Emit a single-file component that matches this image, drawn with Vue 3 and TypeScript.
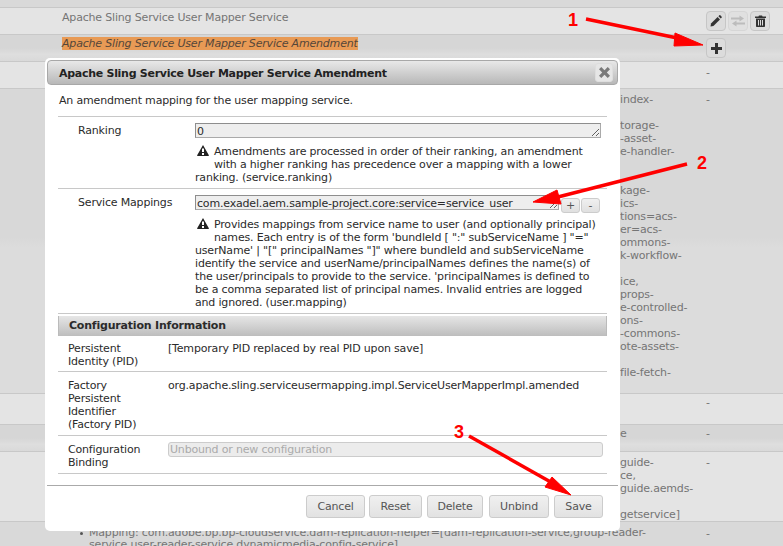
<script setup lang="ts">
interface BgRow { cls: string; name?: string; italic?: boolean; lines?: string[]; dash?: boolean; tools?: boolean; plus?: boolean }
const rows: BgRow[] = [
  { cls: 'r-top' },
  { cls: 'r-light h27 tight', name: 'Apache Sling Service User Mapper Service', tools: true },
  { cls: 'r-grad h27 tighter', name: 'Apache Sling Service User Mapper Service Amendment', italic: true, plus: true },
  { cls: 'r-light h27', dash: true },
  { cls: 'r-dark h305', dash: true, lines: ['index-', '', 'torage-', '-asset-', 'e-handler-', '', '', 'kage-', 'ics-', 'tions=acs-', 'er=acs-', 'ommons-', 'k-workflow-', '', 'ice,', 'props-', 'e-controlled-', 'ons-', '-commons-', 'ote-assets-', '', 'file-fetch-'] },
  { cls: 'r-light h31 tighter', dash: true },
  { cls: 'r-grad h27 tighter', dash: true, lines: ['e'] },
  { cls: 'r-light h70', dash: true, lines: ['guide-', 'ce,', 'guide.aemds-', '', 'getservice]'] }
]
const help1 = ['Amendments are processed in order of their ranking, an amendment', 'with a higher ranking has precedence over a mapping with a lower', 'ranking. (service.ranking)']
const help2 = [
  'Provides mappings from service name to user (and optionally principal)',
  'names. Each entry is of the form \'bundleId [ ":" subServiceName ] "="',
  'userName\' | "[" principalNames "]" where bundleId and subServiceName',
  'identify the service and userName/principalNames defines the name(s) of',
  "the user/principals to provide to the service. 'principalNames is defined to",
  'be a comma separated list of principal names. Invalid entries are logged',
  'and ignored. (user.mapping)'
]
const actions = ['Cancel', 'Reset', 'Delete', 'Unbind', 'Save']
const warn = 'M6 0 12 10.6 11.4 11H.6L0 10.6ZM5 3.5V7H7V3.5ZM5 8V10H7V8Z'
</script>

<template>
  <div class="page">
    <div v-for="(r, i) in rows" :key="i" class="row" :class="r.cls">
      <div class="name"><span v-if="r.name" :class="{ hl: r.italic }">{{ r.name }}</span></div>
      <div class="lines"><div v-for="(l, j) in r.lines" :key="j" class="ln">{{ l }}</div></div>
      <div class="dash"><template v-if="r.dash">-</template></div>
      <div v-if="r.tools" class="tools">
        <span class="tool">
          <svg viewBox="0 0 12 12" width="12" height="12"><path d="M.5 11.5 1 8.6 7.6 2 10 4.4 3.4 11Z" fill="#333" /><path d="M8.4 1.2 9.4.3C9.7 0 10 0 10.3.3L11.7 1.7C12 2 12 2.3 11.7 2.6L10.8 3.6Z" fill="#333" /></svg>
        </span>
        <span class="tool off">
          <svg viewBox="0 0 14 12" width="14" height="12"><path d="M0 2.5H8.5V.5L13 3.5 8.5 6.5V4.5H0Z" fill="#bcbcbc" /><path d="M14 7.5H5.5V5.5L1 8.5 5.5 11.5V9.5H14Z" fill="#bcbcbc" /></svg>
        </span>
        <span class="tool">
          <svg viewBox="0 0 11 12" width="11" height="12"><path d="M0 1.6H3.4L4 .5H7L7.6 1.6H11V3H0ZM1 3.6H10V11C10 11.6 9.6 12 9 12H2C1.4 12 1 11.6 1 11ZM3 5V10.6H4V5ZM5 5V10.6H6V5ZM7 5V10.6H8V5Z" fill="#333" fill-rule="evenodd" /></svg>
        </span>
      </div>
      <div v-if="r.plus" class="tools">
        <span class="tool">
          <svg viewBox="0 0 11 11" width="11" height="11"><path d="M4 0H7V4H11V7H7V11H4V7H0V4H4Z" fill="#333" /></svg>
        </span>
      </div>
    </div>
    <div class="row r-dark last">
      <ul class="maplist">
        <li>Mapping: com.adobe.bp.bp-cloudservice.dam-replication-helper=[dam-replication-service,group-reader-<br />service,user-reader-service,dynamicmedia-config-service]</li>
      </ul>
      <div class="dash lastdash">-</div>
    </div>

    <section class="modal">
      <header class="titlebar">
        <h1>Apache Sling Service User Mapper Service Amendment</h1>
        <button class="close" aria-label="Close">
          <svg viewBox="0 0 12 12" width="11" height="11"><path d="M0 2.5 2.5 0 6 3.5 9.5 0 12 2.5 8.5 6 12 9.5 9.5 12 6 8.5 2.5 12 0 9.5 3.5 6Z" fill="#7a7a7a" /></svg>
        </button>
      </header>

      <div class="body">
        <p class="desc">An amendment mapping for the user mapping service.</p>

        <div class="prop p1">
          <label>Ranking</label>
          <div class="field">
            <textarea class="ta" rows="1" readonly>0</textarea>
            <div class="help">
              <svg class="warn" viewBox="0 0 12 11" width="12" height="11"><path :d="warn" fill="#222" fill-rule="evenodd" /></svg>
              <template v-for="l in help1" :key="l">{{ l }}<br /></template>
            </div>
          </div>
        </div>

        <div class="prop p2">
          <label>Service Mappings</label>
          <div class="field">
            <div class="mapline">
              <textarea class="ta short" rows="1" readonly>com.exadel.aem.sample-project.core:service=service_user</textarea>
              <button class="mini">+</button>
              <button class="mini">-</button>
            </div>
            <div class="help h2">
              <svg class="warn" viewBox="0 0 12 11" width="12" height="11"><path :d="warn" fill="#222" fill-rule="evenodd" /></svg>
              <template v-for="l in help2" :key="l">{{ l }}<br /></template>
            </div>
          </div>
        </div>

        <h2 class="cfg">Configuration Information</h2>

        <div class="info i1">
          <div class="k">Persistent Identity (PID)</div>
          <div class="v">[Temporary PID replaced by real PID upon save]</div>
        </div>
        <div class="info i2">
          <div class="k">Factory Persistent Identifier (Factory PID)</div>
          <div class="v">org.apache.sling.serviceusermapping.impl.ServiceUserMapperImpl.amended</div>
        </div>
        <div class="info i3">
          <div class="k">Configuration Binding</div>
          <div class="v"><input class="bind" disabled value="Unbound or new configuration" /></div>
        </div>
      </div>

      <footer class="pane">
        <button v-for="a in actions" :key="a" class="act" :class="'a-' + a.toLowerCase()">{{ a }}</button>
      </footer>
    </section>

    <svg class="arrows" viewBox="0 0 783 546" width="783" height="546">
      <g fill="#f00" stroke="#f00">
        <path d="M586 19 682 39" stroke-width="3.5" fill="none" />
        <path d="M703 45 675 33 674 46Z" stroke-width="1" />
        <path d="M687 164 550 199" stroke-width="3.5" fill="none" />
        <path d="M533 202 557 190 561 204Z" stroke-width="1" />
        <path d="M469 436 556 485" stroke-width="3.5" fill="none" />
        <path d="M571 495 552 477 545 487Z" stroke-width="1" />
      </g>
    </svg>
    <span class="num n1">1</span>
    <span class="num n2">2</span>
    <span class="num n3">3</span>
  </div>
</template>

<style>
html, body { margin: 0; background: #d9d9d9; overflow: hidden; }
</style>

<style scoped>
.page {
  position: relative;
  width: 783px;
  height: 546px;
  overflow: hidden;
  font: 11px/13px "DejaVu Sans", sans-serif;
  letter-spacing: -0.18px;
  color: #757575;
}
.row { display: flex; box-sizing: border-box; border-bottom: 1px solid #c8c8c8; padding-left: 62px; }
.r-top { height: 8px; background: #d9d9d9; }
.r-light { background: #e4e4e4; }
.r-dark { background: #d9d9d9; }
.r-grad { background: linear-gradient(#d6d6d6 0 50%, #dedede 75%, #d9d9d9); }
.h27 { height: 27px; }
.h31 { height: 31px; }
.h70 { height: 70px; }
.h305 { height: 305px; background: linear-gradient(#d8d8d8 0 49%, #dcdcdc 52%); }
.name { width: 558px; flex: none; padding-top: 4px; white-space: nowrap; }
.hl { background: #e89a55; color: #54463a; font-style: italic; display: inline-block; height: 13px; }
.lines { width: 86px; flex: none; padding-top: 4px; white-space: nowrap; }
.ln { height: 13px; }
.dash { width: 20px; flex: none; padding-top: 4px; }
.tight .name { padding-top: 3px; }
.tighter .name, .tighter .lines, .tighter .dash { padding-top: 2px; }
.tools { display: flex; gap: 2px; margin-top: 3px; margin-left: -20px; }
.tool {
  box-sizing: border-box;
  width: 20px;
  height: 20px;
  display: flex;
  align-items: center;
  justify-content: center;
  background: #dcdcdc;
  border: 1px solid #c6c6c6;
  border-radius: 4px;
}
.tool.off { background: #e0e0e0; border-color: #d6d6d6; }
.last { border: 0; height: 25px; padding-left: 0; }
.maplist { margin: 5px 0 0; padding: 0 0 0 89px; width: 706px; flex: none; box-sizing: border-box; white-space: nowrap; list-style: none; line-height: 12px; }
.maplist li { position: relative; }
.maplist li::before { content: ""; position: absolute; left: -9px; top: 5px; width: 3px; height: 3px; border-radius: 50%; background: #555; }
.lastdash { padding-top: 5px; }

.modal {
  position: absolute;
  left: 45px;
  top: 58px;
  width: 575px;
  height: 473px;
  box-sizing: border-box;
  background: #fff;
  border-radius: 5px;
  padding: 2px;
  color: #2b2b2b;
  display: flex;
  flex-direction: column;
}
.titlebar {
  height: 25px;
  box-sizing: border-box;
  flex: none;
  display: flex;
  align-items: center;
  justify-content: space-between;
  background: linear-gradient(#e8e8e8, #b8b8b8);
  border: 1px solid #a8a8a8;
  border-radius: 4px;
  padding: 0 4px 0 11px;
}
.titlebar h1 { margin: 1px 0 0; font: bold 11px/13px "DejaVu Sans", sans-serif; letter-spacing: -0.28px; color: #222; }
.close {
  width: 18px;
  height: 19px;
  padding: 0;
  display: flex;
  align-items: center;
  justify-content: center;
  background: #e6e6e6;
  border: 1px solid #dedede;
  border-radius: 3px;
}
.body { flex: 1; padding: 0 11px; }
.desc { margin: 0; padding: 9px 0 0 1px; height: 22px; border-bottom: 1px solid #c8c8c8; }
.prop { display: flex; box-sizing: border-box; border-bottom: 1px solid #c8c8c8; }
.p1 { height: 72px; }
.p2 { height: 125px; }
.prop label { width: 137px; flex: none; padding: 7px 0 0 20px; box-sizing: border-box; }
.field { padding-top: 6px; width: 406px; }
.ta {
  display: block;
  box-sizing: border-box;
  width: 406px;
  height: 15px;
  margin: 0;
  padding: 1px 0 0 1px;
  background: #eee;
  border: 1px solid #aaa;
  border-top-color: #8e8e8e;
  border-left-color: #8e8e8e;
  font: 11px/13px "DejaVu Sans", sans-serif;
  letter-spacing: -0.18px;
  color: #2b2b2b;
  resize: both;
  overflow: hidden;
  outline: 0;
  white-space: pre;
}
.mapline { display: flex; height: 15px; }
.ta.short { width: 364px; margin-right: 2px; flex: none; }
.mini {
  box-sizing: border-box;
  width: 19px;
  height: 15px;
  margin: 3px 1px 0 0;
  padding: 0;
  background: linear-gradient(#f0f0f0, #e0e0e0);
  border: 1px solid #ccc;
  border-radius: 3px;
  font: 11px/11px "DejaVu Sans", sans-serif;
  color: #555;
}
.help { margin-top: 7px; white-space: nowrap; }
.help.h2 { margin-top: 8px; }
.warn { float: left; margin: 0 5px 14px 2px; }
.cfg {
  box-sizing: border-box;
  margin: 2px 0 0;
  width: 549px;
  height: 20px;
  padding: 3px 0 0 10px;
  background: linear-gradient(#e6e6e6, #bdbdbd);
  border: 1px solid #bbb;
  border-width: 0 1px;
  font: bold 11px/13px "DejaVu Sans", sans-serif;
  letter-spacing: -0.2px;
  color: #2b2b2b;
}
.info { display: flex; box-sizing: border-box; border-bottom: 1px solid #c8c8c8; width: 549px; }
.i1 { height: 36px; }
.i2 { height: 64px; }
.i3 { height: 38px; }
.k { width: 110px; flex: none; padding: 6px 20px 0 10px; box-sizing: border-box; }
.v { padding-top: 6px; white-space: nowrap; }
.i2 .k, .i2 .v { padding-top: 7px; }
.i3 .k { padding-top: 7px; }
.i3 .v { padding-top: 6px; }
.bind {
  display: block;
  box-sizing: border-box;
  width: 435px;
  height: 15px;
  margin: 0;
  padding: 0 1px;
  background: #ececec;
  border: 1px solid #ccc;
  border-radius: 3px;
  font: 11px "DejaVu Sans", sans-serif;
  letter-spacing: -0.18px;
  color: #aaa;
}
.pane {
  flex: none;
  height: 44px;
  box-sizing: border-box;
  border-top: 1px solid #aaa;
  padding: 9px 15px 0 0;
  display: flex;
  justify-content: flex-end;
}
.act {
  box-sizing: border-box;
  height: 23px;
  padding: 0;
  background: linear-gradient(#f0f0f0, #e2e2e2);
  border: 1px solid #ccc;
  border-radius: 3px;
  font: 11px "DejaVu Sans", sans-serif;
  letter-spacing: -0.18px;
  color: #555;
}
.a-cancel { width: 59px; margin-right: 4px; }
.a-reset { width: 53px; margin-right: 5px; }
.a-delete { width: 56px; margin-right: 6px; }
.a-unbind { width: 60px; margin-right: 5px; }
.a-save { width: 49px; }

.arrows { position: absolute; left: 0; top: 0; pointer-events: none; }
.num { position: absolute; font: bold 18px/20px "Liberation Sans", sans-serif; letter-spacing: 0; color: #f00; }
.n1 { left: 568px; top: 10px; }
.n2 { left: 697px; top: 153px; }
.n3 { left: 454px; top: 422px; }
</style>
